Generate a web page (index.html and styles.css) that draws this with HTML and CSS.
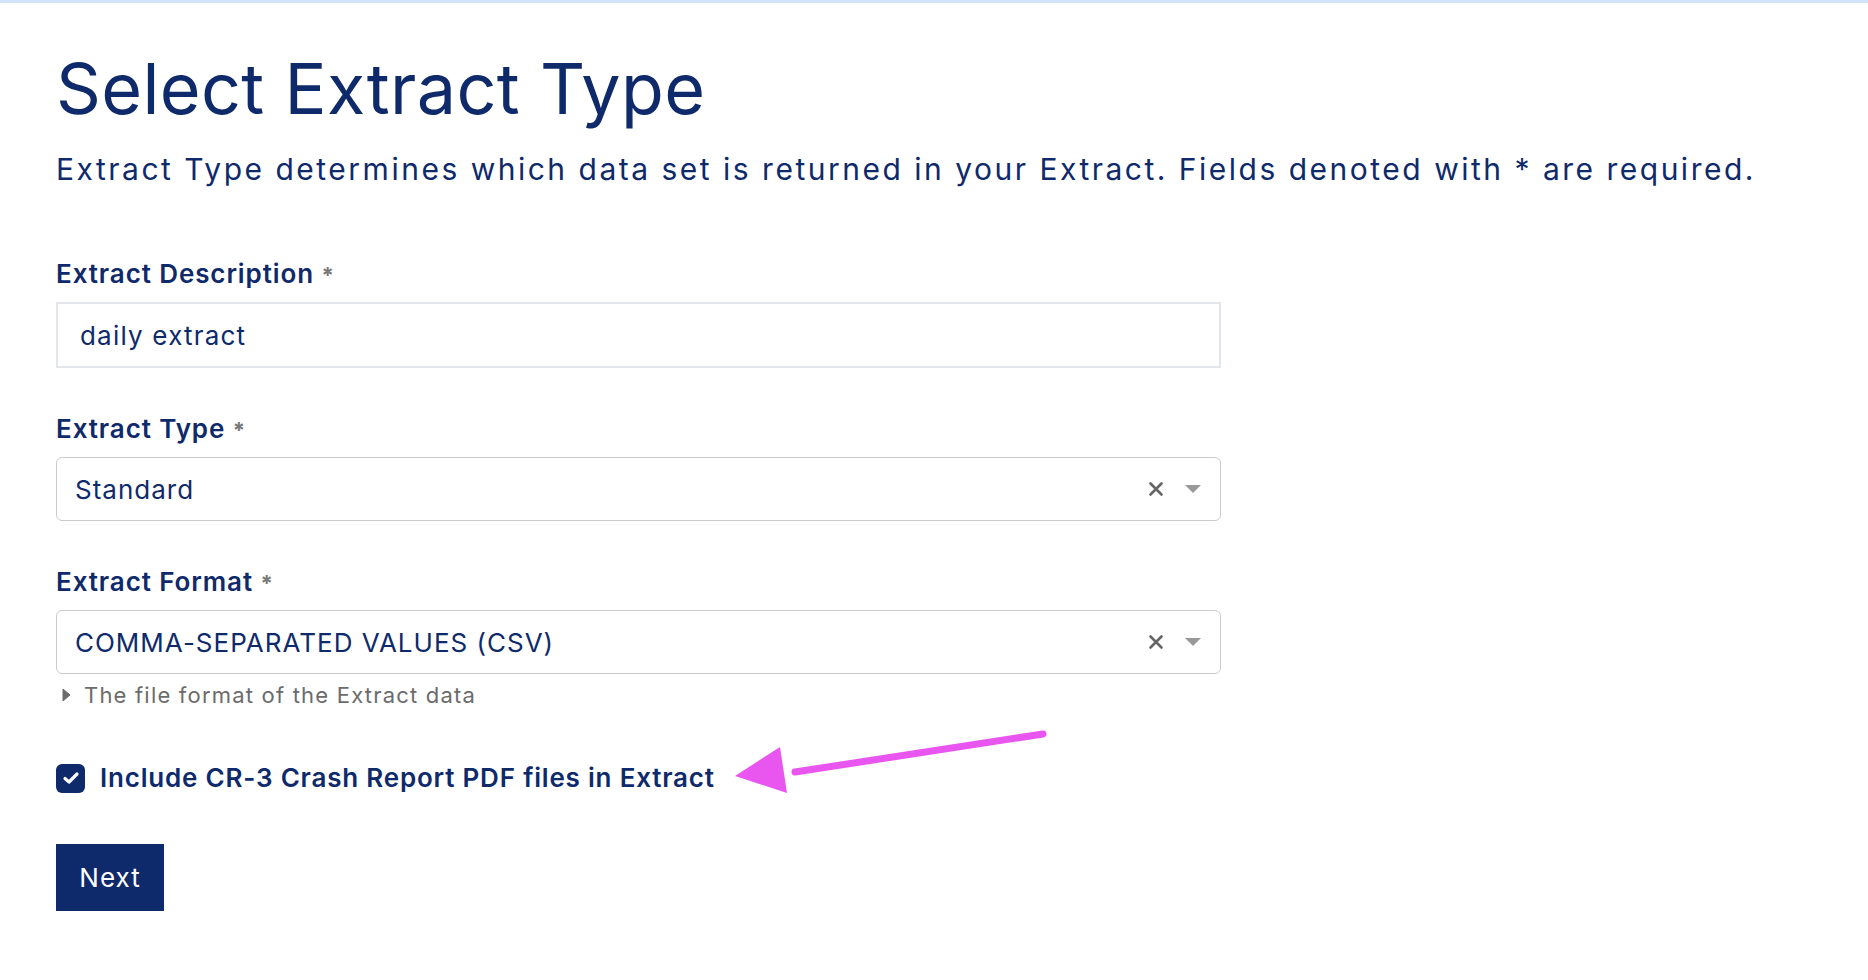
FILE: index.html
```html
<!DOCTYPE html>
<html lang="en">
<head>
<meta charset="utf-8">
<title>Select Extract Type</title>
<link rel="stylesheet" href="styles.css">
</head>
<body>
<div class="topbar"></div>
<main class="page">
  <h1 class="title">Select Extract Type</h1>
  <p class="subtitle">Extract Type determines which data set is returned in your Extract. Fields denoted with * are required.</p>

  <div class="field">
    <label class="label">Extract Description <span class="req">*</span></label>
    <div class="input">daily extract</div>
  </div>

  <div class="field">
    <label class="label">Extract Type <span class="req">*</span></label>
    <div class="select">
      <span class="select-value">Standard</span>
      <span class="select-icons">
        <svg class="clear" width="16" height="16" viewBox="0 0 16 16"><path d="M2.5 2.5 L13.5 13.5 M13.5 2.5 L2.5 13.5" stroke="#666" stroke-width="2.6" stroke-linecap="round" fill="none"/></svg>
        <svg class="caret" width="18" height="10" viewBox="0 0 18 10"><path d="M1 1 H17 L9 9 Z" fill="#999"/></svg>
      </span>
    </div>
  </div>

  <div class="field">
    <label class="label">Extract Format <span class="req">*</span></label>
    <div class="select">
      <span class="select-value">COMMA-SEPARATED VALUES (CSV)</span>
      <span class="select-icons">
        <svg class="clear" width="16" height="16" viewBox="0 0 16 16"><path d="M2.5 2.5 L13.5 13.5 M13.5 2.5 L2.5 13.5" stroke="#666" stroke-width="2.6" stroke-linecap="round" fill="none"/></svg>
        <svg class="caret" width="18" height="10" viewBox="0 0 18 10"><path d="M1 1 H17 L9 9 Z" fill="#999"/></svg>
      </span>
    </div>
    <div class="help">
      <svg class="help-tri" width="9" height="14" viewBox="0 0 9 14"><path d="M1 1 L8 7 L1 13 Z" fill="#6b6b6b" stroke="#6b6b6b" stroke-width="1" stroke-linejoin="round"/></svg>
      <span>The file format of the Extract data</span>
    </div>
  </div>

  <div class="check-row">
    <span class="checkbox">
      <svg width="18" height="14" viewBox="0 0 18 14"><path d="M3 7.5 L7 11 L15 3" stroke="#fff" stroke-width="3.2" stroke-linecap="round" stroke-linejoin="round" fill="none"/></svg>
    </span>
    <span class="check-label">Include CR-3 Crash Report PDF files in Extract</span>
  </div>

  <button class="btn">Next</button>

  <svg class="annot-arrow" width="320" height="80" viewBox="0 0 320 80">
    <path d="M308 10 L60 48" stroke="#e956ef" stroke-width="7" stroke-linecap="round" fill="none"/>
    <path d="M0 52 L45 23 L52 69 Z" fill="#e956ef"/>
  </svg>
</main>
</body>
</html>
```

FILE: styles.css
```css
* { box-sizing: border-box; }

html, body {
  margin: 0;
  padding: 0;
  background: #ffffff;
}

body {
  font-family: "Inter", "Noto Sans", "Liberation Sans", sans-serif;
  color: #0f2a6b;
}

.topbar {
  height: 3px;
  background: #d2e2f8;
}

.page {
  position: relative;
  padding: 0 56px;
}

.title {
  margin: 44px 0 0 0;
  font-size: 70px;
  line-height: 84px;
  font-weight: 400;
  letter-spacing: 0.35px;
  color: #0f2a6b;
}

.subtitle {
  margin: 20px 0 0 0;
  font-size: 30px;
  line-height: 36px;
  font-weight: 400;
  letter-spacing: 2.5px;
  color: #0f2a6b;
}

.field {
  display: flex;
  flex-direction: column;
  width: 1165px;
}

.subtitle + .field { margin-top: 71px; }
.field + .field { margin-top: 45px; }

.label {
  font-size: 26px;
  line-height: 32px;
  font-weight: 600;
  letter-spacing: 0.9px;
  color: #0f2a6b;
}

.req {
  color: #777;
  font-size: 22px;
  font-weight: 700;
}

.input {
  margin-top: 11px;
  height: 66px;
  border: 2px solid #e3e6ea;
  padding: 0 22px;
  display: flex;
  align-items: center;
  font-size: 26px;
  letter-spacing: 1.2px;
  color: #0f2a6b;
}

.select {
  margin-top: 11px;
  height: 64px;
  border: 1.5px solid #cccccc;
  border-radius: 6px;
  padding: 0 18px 0 18px;
  display: flex;
  align-items: center;
  justify-content: space-between;
  font-size: 26px;
  letter-spacing: 1px;
  color: #0f2a6b;
}

.select-icons {
  display: flex;
  align-items: center;
  gap: 20px;
}

.clear { display: block; }
.caret { display: block; }

.help {
  margin-top: 8px;
  display: flex;
  align-items: center;
  gap: 13px;
  padding-left: 6px;
  font-size: 22px;
  line-height: 26px;
  letter-spacing: 1.2px;
  color: #6b6b6b;
}

.help-tri { display: block; }

.check-row {
  margin-top: 54px;
  display: flex;
  align-items: center;
  gap: 15px;
}

.checkbox {
  width: 29px;
  height: 29px;
  border-radius: 6px;
  background: #0f2a6b;
  display: flex;
  align-items: center;
  justify-content: center;
}

.check-label {
  font-size: 26px;
  line-height: 32px;
  font-weight: 600;
  letter-spacing: 0.8px;
  color: #0f2a6b;
}

.btn {
  display: block;
  margin-top: 50px;
  width: 108px;
  height: 67px;
  border: none;
  border-radius: 0;
  background: #0f2a6b;
  color: #ffffff;
  font-family: "Inter", "Noto Sans", "Liberation Sans", sans-serif;
  font-size: 26px;
  font-weight: 400;
  letter-spacing: 1px;
  padding: 0;
}

.annot-arrow {
  position: absolute;
  left: 735px;
  top: 677px;
}
```
